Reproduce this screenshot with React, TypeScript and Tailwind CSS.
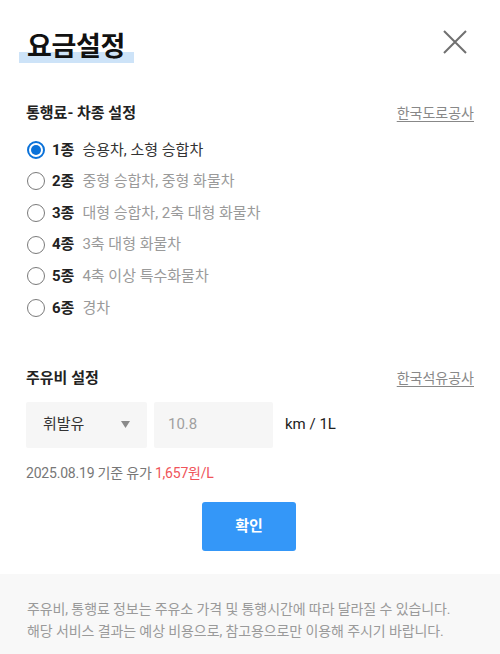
import React from "react";

const options = [
  { num: "1종", desc: "승용차, 소형 승합차" },
  { num: "2종", desc: "중형 승합차, 중형 화물차" },
  { num: "3종", desc: "대형 승합차, 2축 대형 화물차" },
  { num: "4종", desc: "3축 대형 화물차" },
  { num: "5종", desc: "4축 이상 특수화물차" },
  { num: "6종", desc: "경차" },
];

function Radio({ checked }: { checked: boolean }) {
  if (checked) {
    return (
      <span className="flex h-[18px] w-[18px] shrink-0 items-center justify-center rounded-full border-2 border-[#0b72d9] bg-white">
        <span className="h-[10px] w-[10px] rounded-full bg-[#0b72d9]" />
      </span>
    );
  }
  return <span className="h-[18px] w-[18px] shrink-0 rounded-full border-[1.5px] border-[#7a7a7a] bg-white" />;
}

export default function App() {
  const font = { fontFamily: 'Roboto, "Noto Sans CJK KR", sans-serif' };
  return (
    <div className="flex h-[654px] w-[500px] flex-col bg-white" style={font}>
      <div className="px-[26px] pt-[30px]">
        <div className="flex items-start justify-between">
          <div className="relative ml-[1px]">
            <span className="absolute left-[-8px] top-[22px] h-[11px] w-[115px] bg-[#cde3f8]" />
            <h1 className="relative text-[27px] font-bold leading-[34px] tracking-[-0.3px] text-[#111]">요금설정</h1>
          </div>
          <svg width="24" height="24" viewBox="0 0 24 24" className="mr-[7px]">
            <path d="M1 1L23 23M23 1L1 23" stroke="#707070" strokeWidth="2" fill="none" />
          </svg>
        </div>

        <div className="mt-[38px] flex items-center justify-between">
          <h2 className="text-[15px] font-bold leading-[22px] text-[#222]">통행료- 차종 설정</h2>
          <a className="text-[14px] leading-[20px] text-[#888] underline underline-offset-[3px]">한국도로공사</a>
        </div>

        <div className="mt-[10px] flex flex-col">
          {options.map((o, i) => (
            <div key={o.num} className="flex h-[31.6px] items-center pl-[1px]">
              <Radio checked={i === 0} />
              <span className="ml-[7px] text-[15px] font-bold text-[#222]">{o.num}</span>
              <span className={`ml-[8px] text-[15px] ${i === 0 ? "text-[#333]" : "text-[#9a9a9a]"}`}>{o.desc}</span>
            </div>
          ))}
        </div>

        <div className="mt-[43px] flex items-center justify-between">
          <h2 className="text-[15px] font-bold leading-[22px] text-[#222]">주유비 설정</h2>
          <a className="text-[14px] leading-[20px] text-[#888] underline underline-offset-[3px]">한국석유공사</a>
        </div>

        <div className="mt-[13px] flex h-[46px] items-center">
          <div className="flex h-full w-[121px] items-center justify-between rounded-[2px] bg-[#f6f6f6] pl-[17px] pr-[17px]">
            <span className="text-[15px] text-[#333]">휘발유</span>
            <svg width="9" height="7" viewBox="0 0 9 7">
              <path d="M0 0H9L4.5 7Z" fill="#8a8a8a" />
            </svg>
          </div>
          <div className="ml-[7px] flex h-full w-[119px] items-center rounded-[2px] bg-[#f6f6f6] pl-[14px]">
            <span className="text-[15px] text-[#a0a0a0]">10.8</span>
          </div>
          <span className="ml-[12px] text-[15px] text-[#222]">km / 1L</span>
        </div>

        <p className="mt-[15px] text-[14px] leading-[20px] tracking-[-0.2px] text-[#777]">
          2025.08.19 기준 유가 <span className="text-[#f0545a]">1,657원/L</span>
        </p>

        <div className="mt-[19px] flex justify-center pr-[2px]">
          <button className="h-[49px] w-[94px] rounded-[3px] bg-[#3497f8] text-[15px] font-bold text-white">확인</button>
        </div>
      </div>

      <div className="mt-auto h-[80px] bg-[#f8f8f8] px-[27px] pt-[24px]">
        <p className="text-[14px] leading-[22px] tracking-[-0.1px] text-[#9a9a9a]">
          주유비, 통행료 정보는 주유소 가격 및 통행시간에 따라 달라질 수 있습니다.
          <br />
          해당 서비스 결과는 예상 비용으로, 참고용으로만 이용해 주시기 바랍니다.
        </p>
      </div>
    </div>
  );
}
